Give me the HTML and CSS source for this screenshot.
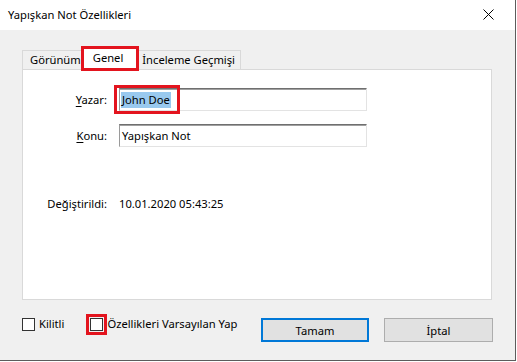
FILE: index.html
```html
<!DOCTYPE html>
<html lang="tr">
<head>
<meta charset="utf-8">
<title>Yapışkan Not Özellikleri</title>
<link rel="stylesheet" href="styles.css">
</head>
<body>
<div class="window">
  <div class="titlebar">
    <span class="title">Yapışkan Not Özellikleri</span>
    <svg class="close" width="11" height="11" viewBox="0 0 11 11"><path d="M0.5 0.5 L10.5 10.5 M10.5 0.5 L0.5 10.5" stroke="#000" stroke-width="1" fill="none"/></svg>
  </div>
  <div class="client">
    <div class="tabs">
      <div class="tab first">Görünüm</div>
      <div class="tab active">Genel</div>
      <div class="tab last">İnceleme Geçmişi</div>
    </div>
    <div class="panel">
      <div class="form">
        <label class="lbl"><u>Y</u>azar:</label>
        <div class="field"><span class="sel">John Doe</span><span class="mark"></span></div>
        <label class="lbl"><u>K</u>onu:</label>
        <div class="field"><span class="txt">Yapışkan Not</span></div>
        <span class="lbl mod">Değiştirildi:</span>
        <span class="val mod">10.01.2020 05:43:25</span>
      </div>
    </div>
    <div class="footer">
      <label class="check"><span class="box"></span><span>Kilitli</span></label>
      <label class="check second"><span class="box marked"></span><span>Özellikleri Varsayılan Yap</span></label>
      <div class="buttons">
        <button class="btn default">Tamam</button>
        <button class="btn">İptal</button>
      </div>
    </div>
  </div>
</div>
</body>
</html>
```
FILE: styles.css
```css
html, body {
  margin: 0;
  padding: 0;
  background: #ffffff;
}
body {
  font-family: "Noto Sans", "Open Sans", sans-serif;
  font-size: 11.2px;
  color: #000;
}
.window {
  width: 515px;
  height: 360px;
  border-right: 1px solid #5c5c5c;
  border-bottom: 1px solid #5c5c5c;
  display: flex;
  flex-direction: column;
  background: #f0f0f0;
}
.titlebar {
  height: 30px;
  background: #ffffff;
  display: flex;
  align-items: center;
  justify-content: space-between;
  padding: 0 21px 0 8px;
  box-sizing: border-box;
}
.title {
  line-height: 16px;
  margin-top: -1px;
}
.close {
  display: block;
  margin-top: -1px;
}
.client {
  flex: 1;
  display: flex;
  flex-direction: column;
}
.tabs {
  display: flex;
  align-items: flex-end;
  padding: 16px 0 0 22px;
  position: relative;
  z-index: 1;
}
.tab {
  box-sizing: border-box;
  height: 19px;
  line-height: 18px;
  border: 1px solid #d9d9d9;
  border-bottom: none;
  background: #f0f0f0;
  white-space: nowrap;
}
.tab.first {
  padding: 0 0 0 7px;
  border-right: none;
}
.tab.last {
  padding: 0 5px 0 3px;
  border-left: none;
}
.tab.active {
  height: 25px;
  margin-bottom: -2px;
  background: #ffffff;
  padding: 1px 13px 0 9px;
  line-height: 16px;
  border: 3px solid #e3141e;
}
.panel {
  box-sizing: border-box;
  margin-left: 22px;
  width: 470px;
  height: 231px;
  background: #ffffff;
  border: 1px solid #d9d9d9;
}
.form {
  display: grid;
  grid-template-columns: 84px 248px;
  column-gap: 12px;
  row-gap: 13px;
  padding-top: 18px;
  align-items: center;
}
.lbl {
  text-align: right;
  line-height: 16px;
  white-space: nowrap;
}
.lbl u {
  text-underline-offset: 2px;
}
.field {
  position: relative;
  box-sizing: border-box;
  height: 23px;
  border-top: 1px solid #6f6f6f;
  border-left: 1px solid #9a9a9a;
  border-right: 1px solid #e3e3e3;
  border-bottom: 1px solid #e3e3e3;
  box-shadow: inset 0 1px 0 #a0a0a0;
  background: #ffffff;
  display: flex;
  align-items: center;
  padding-left: 1px;
}
.sel {
  background: #99c9ef;
  line-height: 16px;
  padding: 0 1px;
}
.txt {
  padding-left: 1px;
  line-height: 16px;
}
.mark {
  position: absolute;
  left: -6px;
  top: -4px;
  width: 66px;
  height: 29px;
  box-sizing: border-box;
  border: 3px solid #e3141e;
}
.mod {
  margin-top: 36px;
  line-height: 16px;
}
.val {
  white-space: nowrap;
}
.footer {
  display: flex;
  align-items: flex-start;
  padding: 16px 22px 0 22px;
}
.check {
  display: flex;
  align-items: center;
  line-height: 16px;
  white-space: nowrap;
}
.check.second {
  margin-left: 26px;
}
.box {
  box-sizing: border-box;
  width: 13px;
  height: 13px;
  border: 1px solid #333333;
  background: #ffffff;
  margin-right: 4px;
}
.box.marked {
  outline: 3px solid #e3141e;
  outline-offset: 1px;
}
.buttons {
  margin-left: auto;
  margin-top: 2px;
  display: flex;
  gap: 15px;
}
.btn {
  box-sizing: border-box;
  width: 108px;
  height: 24px;
  font-family: inherit;
  font-size: inherit;
  color: #000;
  background: #e1e1e1;
  border: 1px solid #adadad;
  padding: 0;
  margin: 0;
}
.btn + .btn {
  width: 109px;
}
.btn.default {
  border: 2px solid #0078d7;
}
```
